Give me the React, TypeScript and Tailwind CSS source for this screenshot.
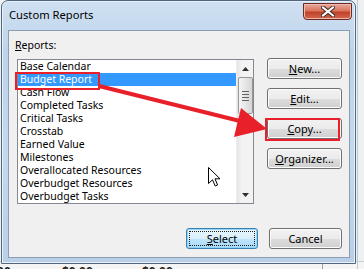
import React from "react";

const items = [
  "Base Calendar",
  "Budget Report",
  "Cash Flow",
  "Completed Tasks",
  "Critical Tasks",
  "Crosstab",
  "Earned Value",
  "Milestones",
  "Overallocated Resources",
  "Overbudget Resources",
  "Overbudget Tasks",
];

function WinButton({
  label,
  hot,
  isDefault,
  className = "",
}: {
  label: string;
  hot?: number;
  isDefault?: boolean;
  className?: string;
}) {
  const before = hot === undefined ? label : label.slice(0, hot);
  const key = hot === undefined ? "" : label[hot];
  const after = hot === undefined ? "" : label.slice(hot + 1);
  return (
    <button
      className={`relative h-[21px] rounded-[3px] border text-[11px] leading-[19px] text-black ${
        isDefault
          ? "border-[#3c7fb1] bg-[linear-gradient(#eaf6fd_0%,#d9f0fc_50%,#bee6fd_51%,#a7d9f5_100%)] shadow-[inset_0_0_0_1px_#94d6f6]"
          : "border-[#707070] bg-[linear-gradient(#f2f2f2_0%,#ebebeb_50%,#dddddd_51%,#cfcfcf_100%)] shadow-[inset_0_0_0_1px_#fcfcfc]"
      } ${className}`}
    >
      {isDefault && (
        <span className="absolute inset-[2px] border border-dotted border-[#202020]" />
      )}
      <span className="relative">
        {before}
        {key && <span className="underline underline-offset-[1px]">{key}</span>}
        {after}
      </span>
    </button>
  );
}

export default function App() {
  return (
    <div
      className="relative w-[364px] h-[269px] overflow-hidden bg-[#eef1f4]"
      style={{ fontFamily: '"Noto Sans", "DejaVu Sans", sans-serif' }}
    >
      {/* spreadsheet behind the dialog */}
      <div className="absolute left-0 top-[261px] w-full h-[8px] overflow-hidden bg-[#f4f4f4] border-t border-[#c9ced6]">
        <span className="absolute left-[-20px] top-[1px] text-[12px] font-bold text-[#1b1b1b]">$0.00</span>
        <span className="absolute left-[62px] top-[1px] text-[12px] font-bold text-[#1b1b1b]">$0.00</span>
        <span className="absolute left-[142px] top-[1px] text-[12px] font-bold text-[#1b1b1b]">$0.00</span>
        <span className="absolute left-[322px] top-0 h-full w-px bg-[#9aa3ad]" />
      </div>
      <div className="absolute left-[357px] top-0 h-full w-px bg-[#c2c8cf]" />

      {/* dialog window */}
      <div className="absolute left-[1px] top-0 w-[355px] h-[264px] rounded-t-[7px] border border-[#4f6580] bg-[linear-gradient(180deg,#cfe0f2_0%,#bed3ea_20%,#c4d8ee_60%,#b9cfe7_100%)] shadow-[inset_0_0_0_1px_#e9f2fb] flex flex-col">
        <div className="relative h-[29px] shrink-0">
          <span className="absolute left-[7px] top-[6px] text-[11.2px] leading-[16px] text-black">
            Custom Reports
          </span>
          <div className="absolute left-[301px] top-[2px] w-[49px] h-[17px] rounded-b-[4px] border border-[#6b2a22] bg-[linear-gradient(#e9a99b_0%,#d8765f_45%,#c2412a_55%,#d06a4e_100%)] shadow-[inset_0_0_0_1px_#f0b8aa] flex items-center justify-center">
            <svg width="14" height="11" viewBox="0 0 14 11">
              <path
                d="M2 1.5 L12 9.5 M12 1.5 L2 9.5"
                stroke="#3d2a28"
                strokeWidth="4"
                strokeLinecap="square"
              />
              <path
                d="M2 1.5 L12 9.5 M12 1.5 L2 9.5"
                stroke="#ffffff"
                strokeWidth="2"
                strokeLinecap="square"
              />
            </svg>
          </div>
        </div>

        {/* client area */}
        <div className="ml-[6px] mr-[5px] h-[228px] border border-[#8b9db3] bg-[#f0f0f0] pt-[8px]">
          <div className="pl-[6px] h-[13px] text-[10.5px] leading-[13px] text-black">
            <span className="underline underline-offset-[1px]">R</span>eports:
          </div>
          <div className="mt-[7px] flex">
            <div className="ml-[8px] w-[237px] h-[145px] border border-[#828790] bg-white flex">
              <div className="flex-1">
                {items.map((it) => (
                  <div
                    key={it}
                    className={`h-[13px] pl-[2px] text-[10.5px] leading-[13px] whitespace-nowrap ${
                      it === "Budget Report" ? "bg-[#3399ff] text-white" : "text-black"
                    }`}
                  >
                    {it}
                  </div>
                ))}
              </div>
              <div className="w-[17px] bg-[linear-gradient(90deg,#e5e5e5,#f3f3f3_30%,#f3f3f3)] border-l border-[#ececec] flex flex-col items-center">
                <div className="h-[17px] w-full flex items-center justify-center">
                  <svg width="7" height="4" viewBox="0 0 7 4">
                    <path d="M3.5 0 L7 4 L0 4 Z" fill="#303030" />
                  </svg>
                </div>
                <div className="w-[15px] h-[37px] rounded-[2px] border border-[#979797] bg-[linear-gradient(90deg,#f5f5f5,#e6e6e6_50%,#d6d6d6)] flex flex-col items-center justify-center gap-[2px]">
                  <span className="w-[7px] h-px bg-[#616161]" />
                  <span className="w-[7px] h-px bg-[#616161]" />
                  <span className="w-[7px] h-px bg-[#616161]" />
                  <span className="w-[7px] h-px bg-[#616161]" />
                </div>
                <div className="flex-1" />
                <div className="h-[17px] w-full flex items-center justify-center">
                  <svg width="7" height="4" viewBox="0 0 7 4">
                    <path d="M0 0 L7 0 L3.5 4 Z" fill="#303030" />
                  </svg>
                </div>
              </div>
            </div>
            <div className="ml-[13px] -mt-[1px] flex flex-col gap-[9px]">
              <WinButton label="New..." hot={0} className="w-[75px]" />
              <WinButton label="Edit..." hot={0} className="w-[75px]" />
              <WinButton label="Copy..." hot={0} className="w-[75px]" />
              <WinButton label="Organizer..." hot={0} className="w-[75px]" />
            </div>
          </div>
          <div className="mt-[24px] pr-[7px] flex justify-end gap-[11px]">
            <WinButton label="Select" hot={0} isDefault className="w-[72px]" />
            <WinButton label="Cancel" className="w-[73px]" />
          </div>
        </div>
      </div>

      {/* annotation overlays */}
      <div className="absolute left-[15px] top-[72px] w-[85px] h-[18px] border-2 border-[#e8202a]" />
      <div className="absolute left-[265px] top-[118px] w-[75px] h-[23px] border-2 border-[#e8202a]" />
      <svg className="absolute left-0 top-0" width="364" height="269" viewBox="0 0 364 269">
        <path d="M99 86 L244 122" stroke="#e8202a" strokeWidth="4" />
        <path d="M267 129 L241 108 L234 137 Z" fill="#e8202a" />
      </svg>

      {/* mouse cursor */}
      <svg className="absolute left-[208px] top-[167px]" width="13" height="21" viewBox="0 0 13 21">
        <path
          d="M0.5 0.5 L0.5 16.5 L4.5 12.8 L7.2 19 L9.6 18 L7 11.8 L12 11.8 Z"
          fill="#ffffff"
          stroke="#000000"
          strokeWidth="1"
        />
      </svg>
    </div>
  );
}
